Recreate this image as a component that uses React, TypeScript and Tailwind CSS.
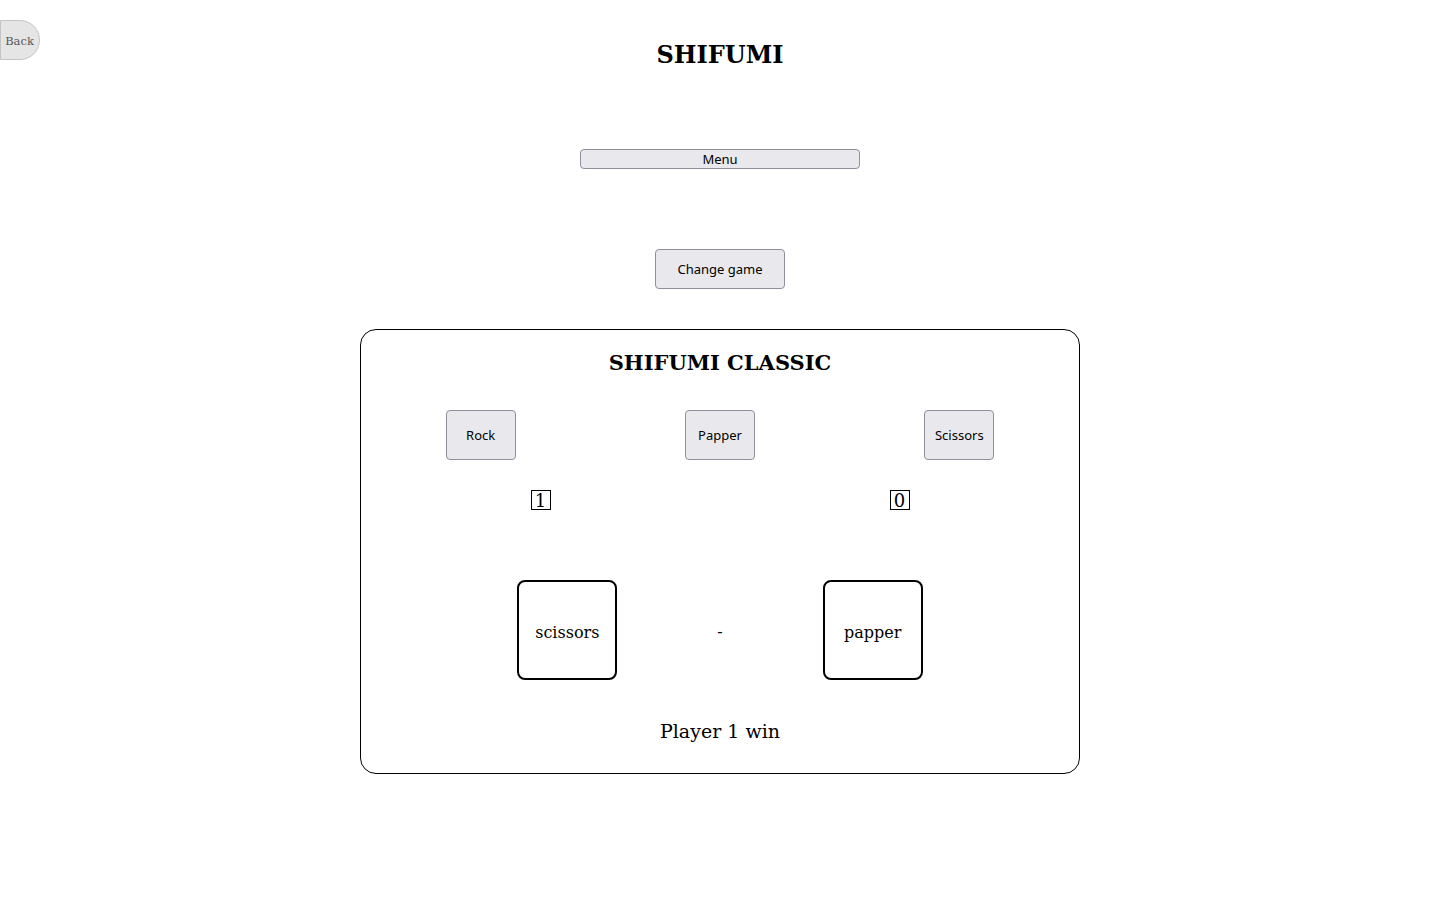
import { useState } from "react";

const serif = "font-['DejaVu_Serif',serif]";
const btn =
  "bg-[#e9e9ed] border border-[#8f8f9d] rounded-[4px] text-[13px] text-black font-['Noto_Sans',sans-serif] hover:bg-[#d0d0d7]";

const App = () => {
  const [score] = useState({ p1: 1, p2: 0 });

  return (
    <div className={`relative min-h-[900px] bg-white text-black ${serif}`}>
      <button className="absolute left-0 top-[20px] w-[40px] h-[40px] pt-[3px] pr-[1px] rounded-r-full bg-[#e5e5e5] border border-[#c4c4c4] text-[11.5px] text-[#555] font-['DejaVu_Serif',serif]">
        Back
      </button>

      <div className="flex flex-col items-center pt-[39px]">
        <h1 className="text-[24px] leading-[32px] font-bold">SHIFUMI</h1>

        <button className={`${btn} mt-[78px] w-[280px] h-[20px] leading-[18px]`}>Menu</button>

        <button className={`${btn} mt-[80px] w-[130px] h-[40px] pt-[2px]`}>Change game</button>

        <div className="mt-[40px] w-[720px] h-[445px] border border-black rounded-[16px] flex flex-col">
          <h2 className="mt-[19px] text-center text-[21px] leading-[28px] font-bold">SHIFUMI CLASSIC</h2>

          <div className="mt-[33px] flex justify-around">
            {["Rock", "Papper", "Scissors"].map((c) => (
              <button key={c} className={`${btn} w-[70px] h-[50px] pt-[2px]`}>
                {c}
              </button>
            ))}
          </div>

          <div className="mt-[30px] flex justify-around">
            <span className="w-[20px] h-[20px] pt-[2px] border border-black flex items-center justify-center text-[18px] leading-none">
              {score.p1}
            </span>
            <span className="w-[20px] h-[20px] pt-[2px] border border-black flex items-center justify-center text-[18px] leading-none">
              {score.p2}
            </span>
          </div>

          <div className="mt-[70px] flex justify-center items-center gap-[100px]">
            <div className="w-[100px] h-[100px] pt-[5px] border-2 border-black rounded-[8px] flex items-center justify-center text-[16px]">
              scissors
            </div>
            <span className="pt-[4px] text-[16px]">-</span>
            <div className="w-[100px] h-[100px] pt-[5px] border-2 border-black rounded-[8px] flex items-center justify-center text-[16px]">
              papper
            </div>
          </div>

          <p className="mt-[38px] text-center text-[19px] leading-[26px]">Player 1 win</p>
        </div>
      </div>
    </div>
  );
};

export default App;
